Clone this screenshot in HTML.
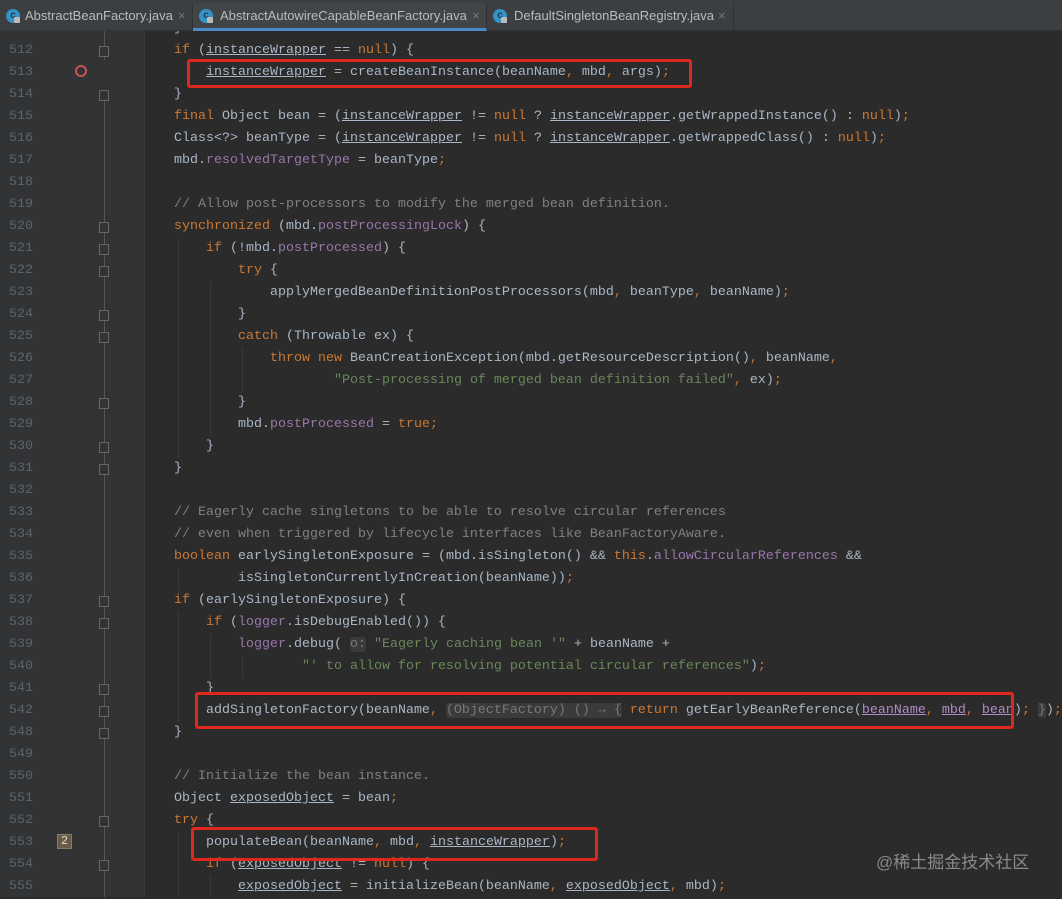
<!DOCTYPE html>
<html><head><meta charset="utf-8">
<style>
*{margin:0;padding:0;box-sizing:border-box}
body{width:1062px;height:897px;background:#2b2b2b;overflow:hidden;position:relative;font-family:"Liberation Mono",monospace;font-size:13.33px}
.gut{position:absolute;left:0;top:0;width:145px;height:897px;background:#313335;border-right:1px solid #3a3a3a}
.tabs{position:absolute;left:0;top:0;width:1062px;height:31px;background:#3c3f41;border-bottom:1px solid #323232;font-family:"Liberation Sans",sans-serif;font-size:13px;color:#bbbbbb}
.tab{position:absolute;top:3px;height:28px;line-height:26px;border-right:1px solid #323232}
.tab.act{background:#414547;border-bottom:3px solid #4a88c7}
.ic{position:absolute;left:6px;top:6px;width:14px;height:14px;border-radius:50%;background:#3592c4;color:#1c3c50;font-size:10px;line-height:14px;text-align:center;font-weight:bold}
.ic:after{content:"";position:absolute;left:8px;top:8px;width:6px;height:6px;background:#bbb;border-radius:1px}
.x{position:absolute;color:#777;font-size:13px}
.ln{position:absolute;left:0;width:33px;text-align:right;color:#606366;height:22px;line-height:22px;margin-top:2px}
.row{position:absolute;left:142px;height:22px;line-height:22px;white-space:pre;color:#a9b7c6;margin-top:2px}
.k{color:#cc7832}.s{color:#6a8759}.c{color:#808080}.f{color:#9876aa}.u{text-decoration:underline}.p{color:#b389c5;text-decoration:underline}
.inl{background:#3b3b3b;color:#787878;border-radius:3px}
.box{position:absolute;border:3px solid #e0271d;border-radius:3px}
.fold{position:absolute;left:99px;width:10px;height:11px;border:1px solid #666;background:#313335;margin-top:2px}
.vl{position:absolute;left:104px;width:1px;background:#555}
.guide{position:absolute;width:1px;background:#3a3a3a;margin-top:2px}
</style></head><body>
<div class="gut"></div>
<div class="vl" style="top:30px;height:30px"></div>
<div class="vl" style="top:100px;height:797px"></div>

<div class="ln" style="top:38px">512</div>
<div class="ln" style="top:60px">513</div>
<div class="ln" style="top:82px">514</div>
<div class="ln" style="top:104px">515</div>
<div class="ln" style="top:126px">516</div>
<div class="ln" style="top:148px">517</div>
<div class="ln" style="top:170px">518</div>
<div class="ln" style="top:192px">519</div>
<div class="ln" style="top:214px">520</div>
<div class="ln" style="top:236px">521</div>
<div class="ln" style="top:258px">522</div>
<div class="ln" style="top:280px">523</div>
<div class="ln" style="top:302px">524</div>
<div class="ln" style="top:324px">525</div>
<div class="ln" style="top:346px">526</div>
<div class="ln" style="top:368px">527</div>
<div class="ln" style="top:390px">528</div>
<div class="ln" style="top:412px">529</div>
<div class="ln" style="top:434px">530</div>
<div class="ln" style="top:456px">531</div>
<div class="ln" style="top:478px">532</div>
<div class="ln" style="top:500px">533</div>
<div class="ln" style="top:522px">534</div>
<div class="ln" style="top:544px">535</div>
<div class="ln" style="top:566px">536</div>
<div class="ln" style="top:588px">537</div>
<div class="ln" style="top:610px">538</div>
<div class="ln" style="top:632px">539</div>
<div class="ln" style="top:654px">540</div>
<div class="ln" style="top:676px">541</div>
<div class="ln" style="top:698px">542</div>
<div class="ln" style="top:720px">548</div>
<div class="ln" style="top:742px">549</div>
<div class="ln" style="top:764px">550</div>
<div class="ln" style="top:786px">551</div>
<div class="ln" style="top:808px">552</div>
<div class="ln" style="top:830px">553</div>
<div class="ln" style="top:852px">554</div>
<div class="ln" style="top:874px">555</div>

<div class="fold" style="top:44px"></div>
<div class="fold" style="top:88px"></div>
<div class="fold" style="top:220px"></div>
<div class="fold" style="top:242px"></div>
<div class="fold" style="top:264px"></div>
<div class="fold" style="top:308px"></div>
<div class="fold" style="top:330px"></div>
<div class="fold" style="top:396px"></div>
<div class="fold" style="top:440px"></div>
<div class="fold" style="top:462px"></div>
<div class="fold" style="top:594px"></div>
<div class="fold" style="top:616px"></div>
<div class="fold" style="top:682px"></div>
<div class="fold" style="top:704px"></div>
<div class="fold" style="top:726px"></div>
<div class="fold" style="top:814px"></div>
<div class="fold" style="top:858px"></div>

<div style="position:absolute;left:75px;top:65px;width:12px;height:12px;border:2px solid #c75450;border-radius:50%"></div>
<div style="position:absolute;left:57px;top:834px;width:15px;height:15px;background:#6b5a45;border:1px solid #8a7a60;color:#ddd;font-size:12px;line-height:13px;text-align:center">2</div>

<div class="guide" style="left:178px;top:236px;height:220px"></div>
<div class="guide" style="left:210px;top:280px;height:154px"></div>
<div class="guide" style="left:242px;top:346px;height:44px"></div>
<div class="guide" style="left:178px;top:566px;height:22px"></div>
<div class="guide" style="left:178px;top:610px;height:110px"></div>
<div class="guide" style="left:210px;top:632px;height:44px"></div>
<div class="guide" style="left:242px;top:654px;height:22px"></div>
<div class="guide" style="left:178px;top:830px;height:67px"></div>
<div class="guide" style="left:210px;top:874px;height:23px"></div>

<div class="row" style="top:16px">    }</div>
<div class="row" style="top:38px">    <span class="k">if</span> (<span class="u">instanceWrapper</span> == <span class="k">null</span>) {</div>
<div class="row" style="top:60px">        <span class="u">instanceWrapper</span> = createBeanInstance(beanName<span class="k">,</span> mbd<span class="k">,</span> args)<span class="k">;</span></div>
<div class="row" style="top:82px">    }</div>
<div class="row" style="top:104px">    <span class="k">final</span> Object bean = (<span class="u">instanceWrapper</span> != <span class="k">null</span> ? <span class="u">instanceWrapper</span>.getWrappedInstance() : <span class="k">null</span>)<span class="k">;</span></div>
<div class="row" style="top:126px">    Class&lt;?&gt; beanType = (<span class="u">instanceWrapper</span> != <span class="k">null</span> ? <span class="u">instanceWrapper</span>.getWrappedClass() : <span class="k">null</span>)<span class="k">;</span></div>
<div class="row" style="top:148px">    mbd.<span class="f">resolvedTargetType</span> = beanType<span class="k">;</span></div>
<div class="row" style="top:192px">    <span class="c">// Allow post-processors to modify the merged bean definition.</span></div>
<div class="row" style="top:214px">    <span class="k">synchronized</span> (mbd.<span class="f">postProcessingLock</span>) {</div>
<div class="row" style="top:236px">        <span class="k">if</span> (!mbd.<span class="f">postProcessed</span>) {</div>
<div class="row" style="top:258px">            <span class="k">try</span> {</div>
<div class="row" style="top:280px">                applyMergedBeanDefinitionPostProcessors(mbd<span class="k">,</span> beanType<span class="k">,</span> beanName)<span class="k">;</span></div>
<div class="row" style="top:302px">            }</div>
<div class="row" style="top:324px">            <span class="k">catch</span> (Throwable ex) {</div>
<div class="row" style="top:346px">                <span class="k">throw new</span> BeanCreationException(mbd.getResourceDescription()<span class="k">,</span> beanName<span class="k">,</span></div>
<div class="row" style="top:368px">                        <span class="s">"Post-processing of merged bean definition failed"</span><span class="k">,</span> ex)<span class="k">;</span></div>
<div class="row" style="top:390px">            }</div>
<div class="row" style="top:412px">            mbd.<span class="f">postProcessed</span> = <span class="k">true;</span></div>
<div class="row" style="top:434px">        }</div>
<div class="row" style="top:456px">    }</div>
<div class="row" style="top:500px">    <span class="c">// Eagerly cache singletons to be able to resolve circular references</span></div>
<div class="row" style="top:522px">    <span class="c">// even when triggered by lifecycle interfaces like BeanFactoryAware.</span></div>
<div class="row" style="top:544px">    <span class="k">boolean</span> earlySingletonExposure = (mbd.isSingleton() &amp;&amp; <span class="k">this</span>.<span class="f">allowCircularReferences</span> &amp;&amp;</div>
<div class="row" style="top:566px">            isSingletonCurrentlyInCreation(beanName))<span class="k">;</span></div>
<div class="row" style="top:588px">    <span class="k">if</span> (earlySingletonExposure) {</div>
<div class="row" style="top:610px">        <span class="k">if</span> (<span class="f">logger</span>.isDebugEnabled()) {</div>
<div class="row" style="top:632px">            <span class="f">logger</span>.debug( <span class="inl">o:</span> <span class="s">"Eagerly caching bean '"</span> + beanName +</div>
<div class="row" style="top:654px">                    <span class="s">"' to allow for resolving potential circular references"</span>)<span class="k">;</span></div>
<div class="row" style="top:676px">        }</div>
<div class="row" style="top:698px">        addSingletonFactory(beanName<span class="k">,</span> <span class="inl">(ObjectFactory) () → {</span> <span class="k">return</span> getEarlyBeanReference(<span class="p">beanName</span><span class="k">,</span> <span class="p">mbd</span><span class="k">,</span> <span class="p">bean</span>)<span class="k">;</span> <span class="inl">}</span>)<span class="k">;</span></div>
<div class="row" style="top:720px">    }</div>
<div class="row" style="top:764px">    <span class="c">// Initialize the bean instance.</span></div>
<div class="row" style="top:786px">    Object <span class="u">exposedObject</span> = bean<span class="k">;</span></div>
<div class="row" style="top:808px">    <span class="k">try</span> {</div>
<div class="row" style="top:830px">        populateBean(beanName<span class="k">,</span> mbd<span class="k">,</span> <span class="u">instanceWrapper</span>)<span class="k">;</span></div>
<div class="row" style="top:852px">        <span class="k">if</span> (<span class="u">exposedObject</span> != <span class="k">null</span>) {</div>
<div class="row" style="top:874px">            <span class="u">exposedObject</span> = initializeBean(beanName<span class="k">,</span> <span class="u">exposedObject</span><span class="k">,</span> mbd)<span class="k">;</span></div>

<div class="box" style="left:187px;top:59px;width:505px;height:29px"></div>
<div class="box" style="left:195px;top:692px;width:819px;height:37px"></div>
<div class="box" style="left:191px;top:827px;width:407px;height:34px"></div>

<div style="position:absolute;left:876px;top:848px;font-family:'Liberation Sans','Noto Sans CJK SC',sans-serif;font-size:17px;color:#8a8a8a">@稀土掘金技术社区</div>

<div class="tabs">
 <div class="tab" style="left:0;width:193px"><span class="ic">c</span><span style="position:absolute;left:25px">AbstractBeanFactory.java</span><span class="x" style="left:178px">×</span></div>
 <div class="tab act" style="left:193px;width:294px"><span class="ic">c</span><span style="position:absolute;left:27px">AbstractAutowireCapableBeanFactory.java</span><span class="x" style="left:279px">×</span></div>
 <div class="tab" style="left:487px;width:247px"><span class="ic">c</span><span style="position:absolute;left:27px">DefaultSingletonBeanRegistry.java</span><span class="x" style="left:231px">×</span></div>
</div>
</body></html>
